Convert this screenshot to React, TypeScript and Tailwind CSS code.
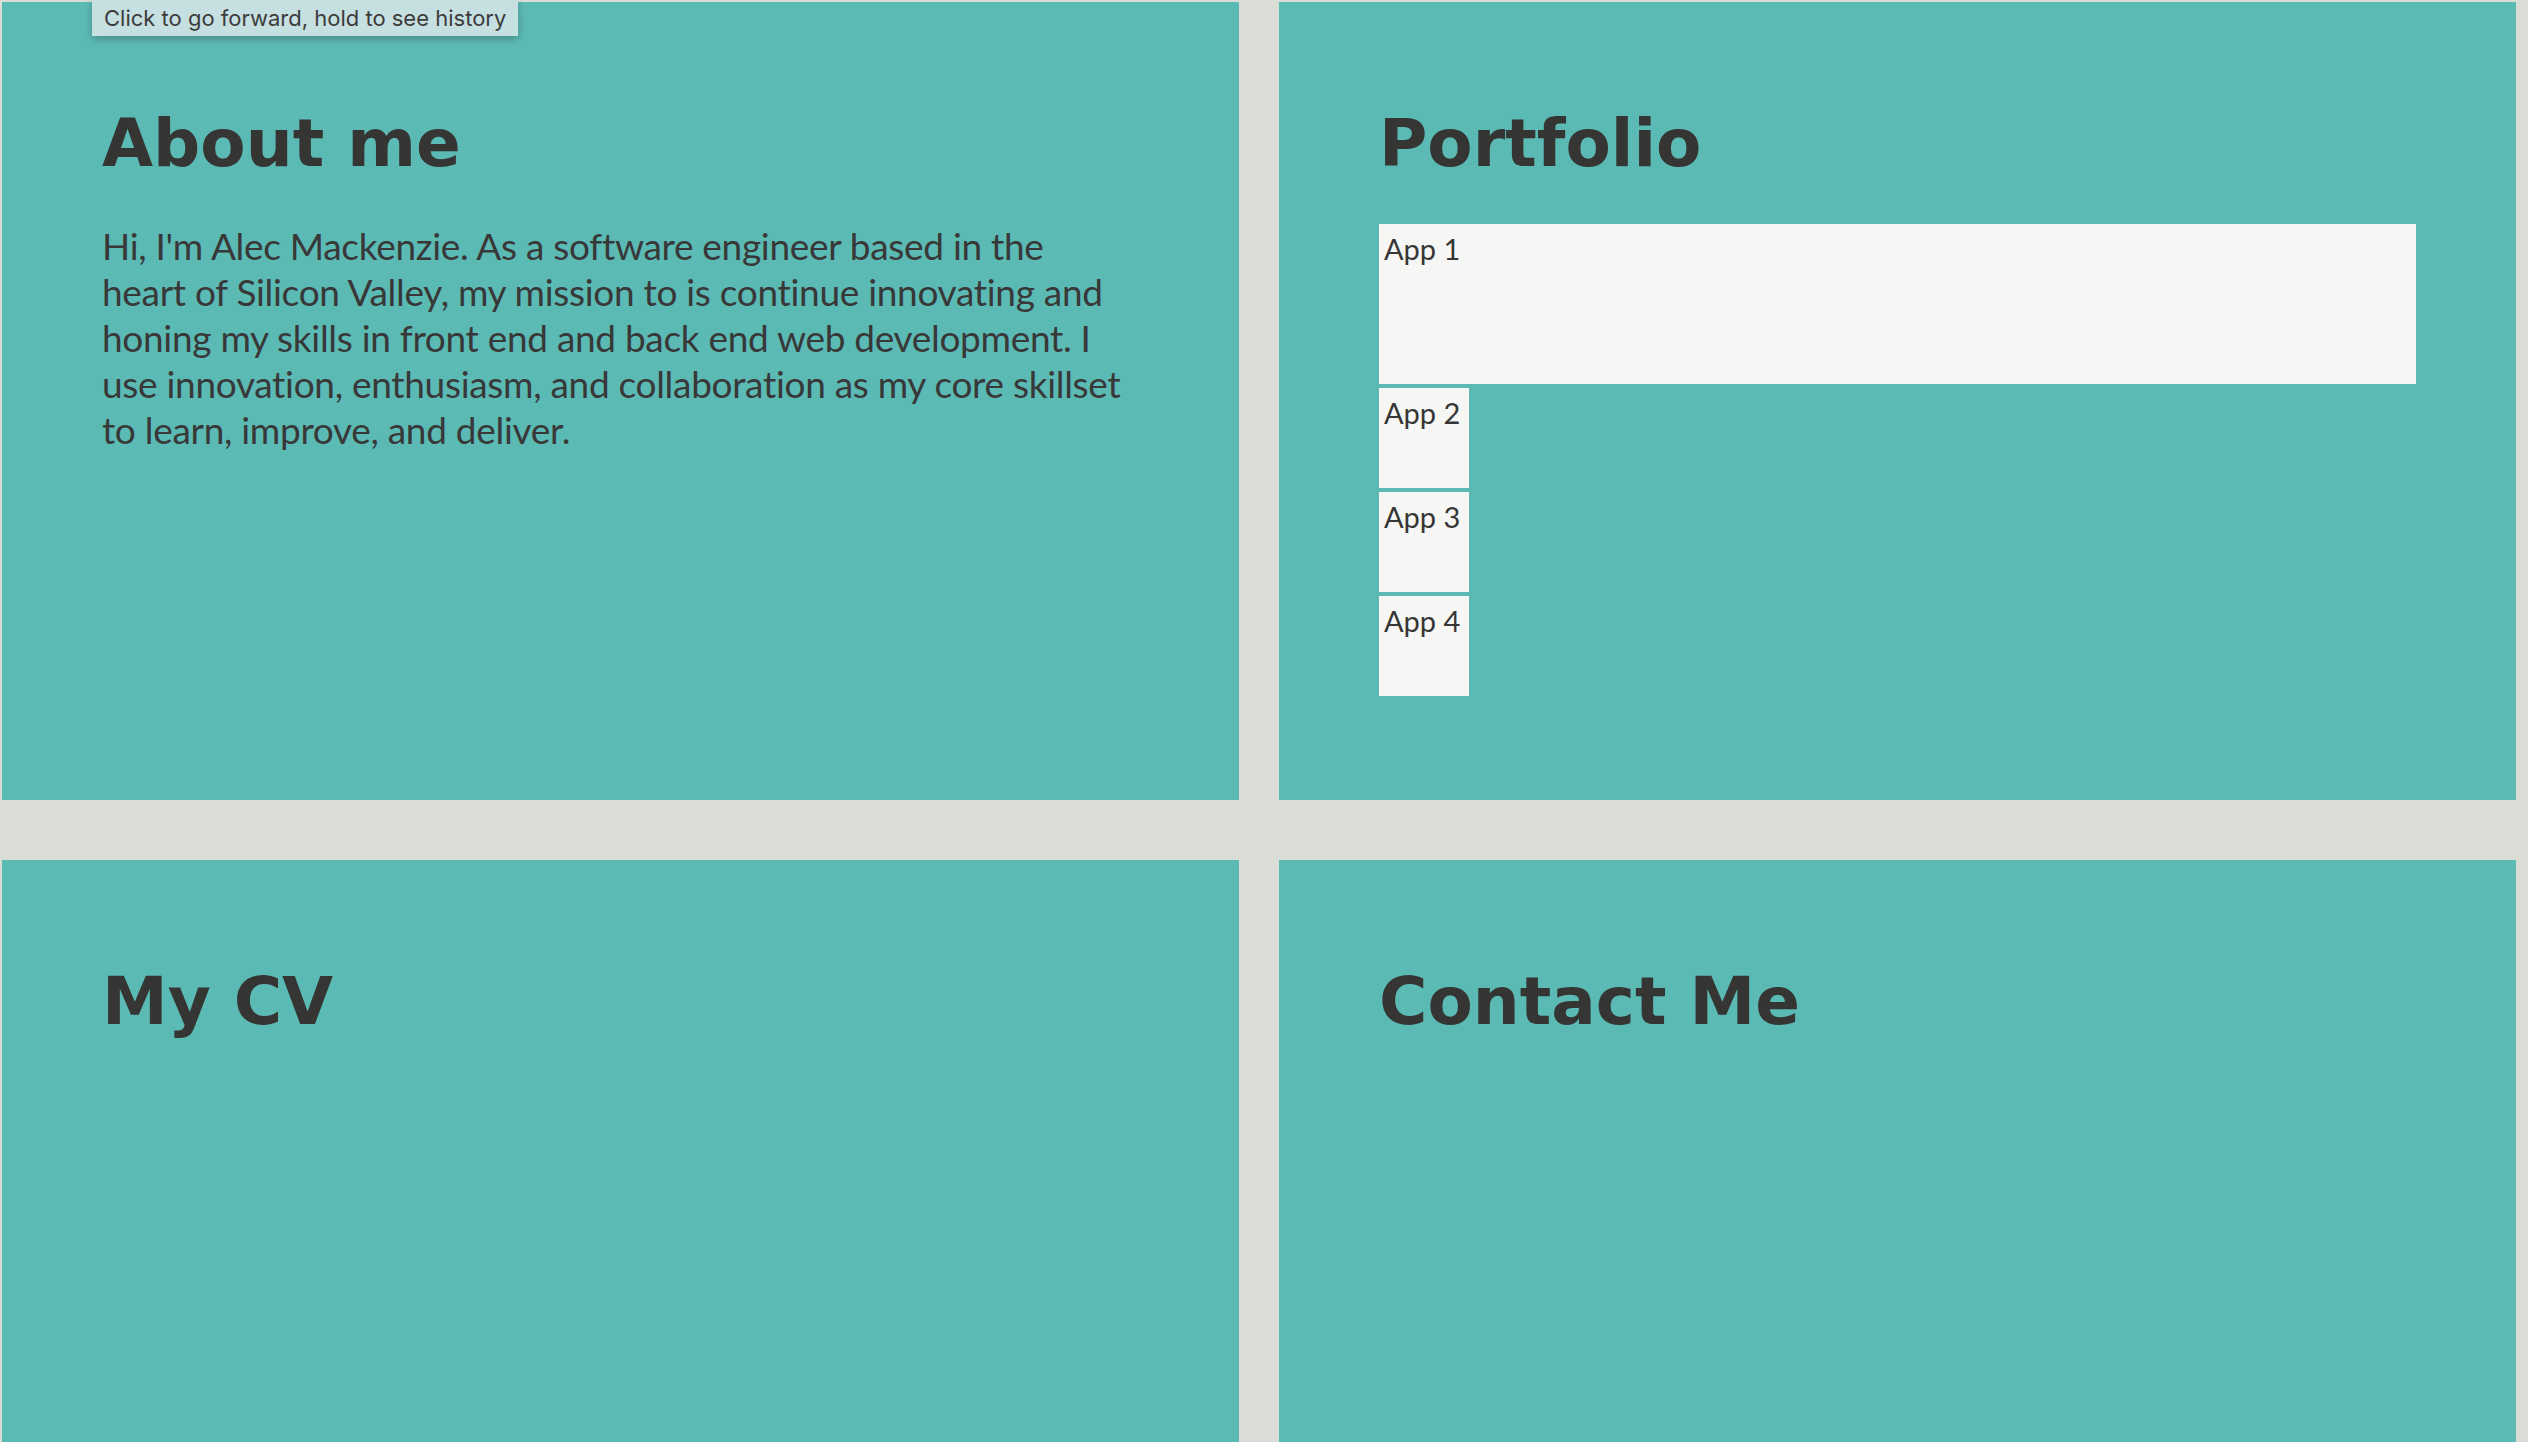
import React from "react";

const heading = "font-['DejaVu_Sans',sans-serif] font-bold text-[66px] leading-none text-[#353533] m-0";

function Panel({ children }: { children?: React.ReactNode }) {
  return <section className="bg-[#5cbab5] px-[100px] pt-[109px]">{children}</section>;
}

export default function App() {
  return (
    <div className="relative h-screen overflow-hidden bg-[#dadcd6] pl-[2px] pt-[2px] pr-[12px] grid grid-cols-2 grid-rows-[798px_798px] gap-x-[40px] gap-y-[60px]">
      <Panel>
        <h1 className={heading}>About me</h1>
        <p className="mt-[46px] whitespace-nowrap font-['Lato',sans-serif] text-[37px] leading-[46px] tracking-[-0.3px] text-[#383838]">
          Hi, I'm Alec Mackenzie. As a software engineer based in the
          <br />
          heart of Silicon Valley, my mission to is continue innovating and
          <br />
          honing my skills in front end and back end web development. I
          <br />
          use innovation, enthusiasm, and collaboration as my core skillset
          <br />
          to learn, improve, and deliver.
        </p>
      </Panel>
      <Panel>
        <h1 className={heading}>Portfolio</h1>
        <div className="mt-[47px] flex flex-col gap-[4px] font-['Lato',sans-serif] text-[29px] text-[#363636]">
          <div className="h-[160px] w-full bg-[#f6f6f4] pl-[5px] pt-[3px]">App 1</div>
          <div className="h-[100px] w-[90px] bg-[#f6f6f4] pl-[5px] pt-[3px]">App 2</div>
          <div className="h-[100px] w-[90px] bg-[#f6f6f4] pl-[5px] pt-[3px]">App 3</div>
          <div className="h-[100px] w-[90px] bg-[#f6f6f4] pl-[5px] pt-[3px]">App 4</div>
        </div>
      </Panel>
      <Panel>
        <h1 className={heading}>My CV</h1>
      </Panel>
      <Panel>
        <h1 className={heading}>Contact Me</h1>
      </Panel>
      <div className="absolute left-[92px] top-0 h-[36px] flex items-center px-[12px] bg-[#c6dfe0] shadow-[0_3px_8px_rgba(0,0,0,0.25)] font-['Inter',sans-serif] text-[22px] text-[#3c3c3c]">
        Click to go forward, hold to see history
      </div>
    </div>
  );
}
